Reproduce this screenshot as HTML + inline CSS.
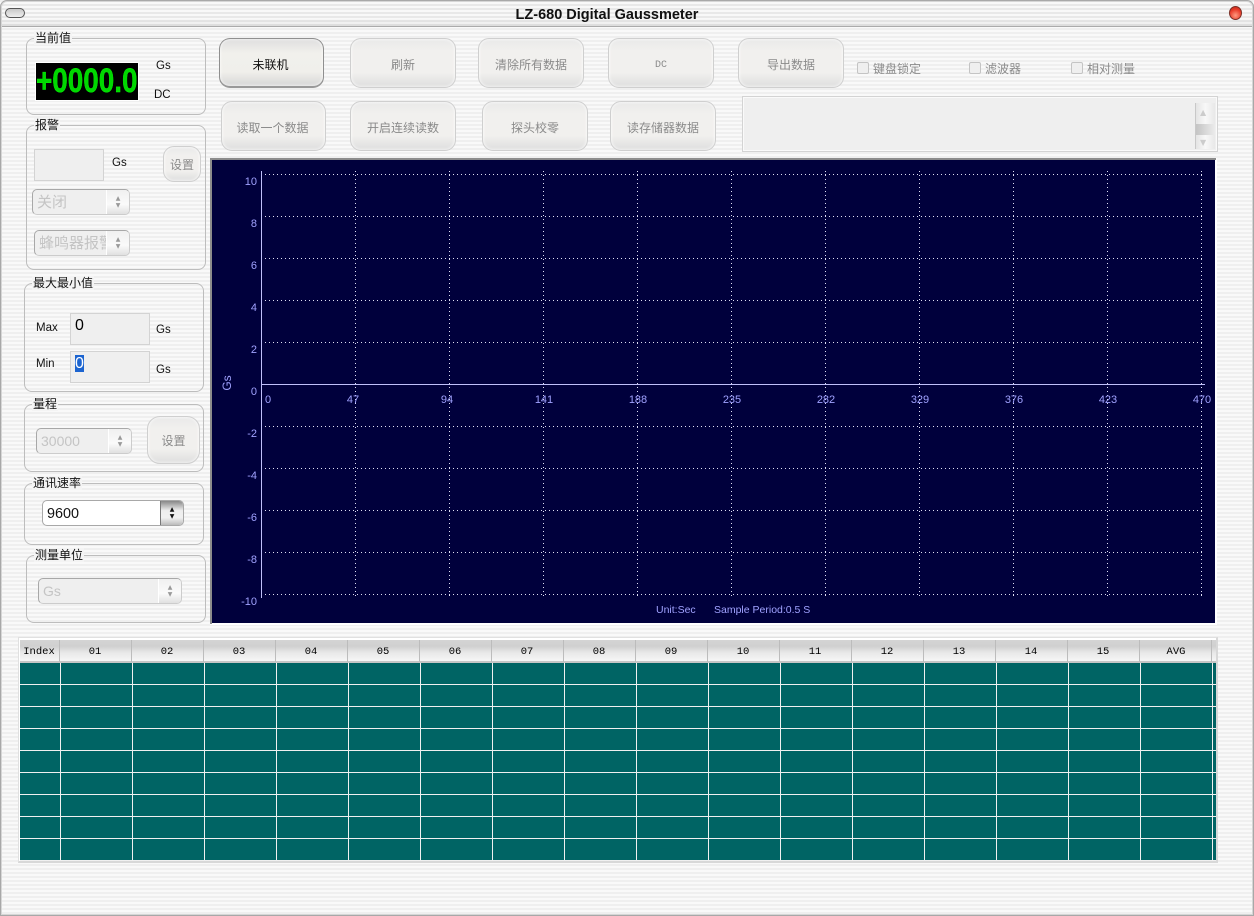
<!DOCTYPE html>
<html><head><meta charset="utf-8"><title>LZ-680 Digital Gaussmeter</title>
<style>
html,body{margin:0;padding:0}
body{width:1254px;height:916px;position:relative;overflow:hidden;background:repeating-linear-gradient(180deg,#efefef 0,#efefef 2px,#f9f9f9 2px,#f9f9f9 4px);font:12px "WenQuanYi Zen Hei","Noto Sans CJK SC","Liberation Sans",sans-serif;color:#000}
div,span,b{position:absolute;box-sizing:border-box;white-space:nowrap}
#frame{left:0;top:0;width:1254px;height:916px;border:1px solid #a8a8a8;border-radius:7px 7px 0 0;box-shadow:inset 0 0 0 1px #d6d6d6;pointer-events:none}
#tb{left:0;top:0;width:1254px;height:27px;border-bottom:1px solid #ababab;background:linear-gradient(180deg,transparent 70%,rgba(0,0,0,.05)),repeating-linear-gradient(180deg,#e8e8e8 0,#e8e8e8 2px,#f8f8f8 2px,#f8f8f8 4px);border-radius:7px 7px 0 0}
#title{left:0;width:1214px;top:7px;text-align:center;font:bold 14.5px "Liberation Sans",sans-serif;color:#111}
#pill{left:5px;top:8px;width:20px;height:10px;border:1px solid #555;border-radius:5px;background:linear-gradient(#c8c8c8,#eee)}
#close{left:1229px;top:6px;width:13px;height:14px;border-radius:50%;border:1px solid #7a3028;background:radial-gradient(circle at 50% 70%,#ff9a80,#e83a28 60%,#b82818)}
.g{border:1px solid #bdbdbd;border-radius:8px}
.l{background:#f4f4f4;padding:0 1px;line-height:14px;height:14px;font-size:12px;color:#111}
.t{font:11.5px "Liberation Sans",sans-serif;color:#111}
.btn{border:1px solid #cfcfcf;border-radius:11px;background:linear-gradient(#e9e9e9,#f1f0ee 25%,#f1f0ee 70%,#dedede);box-shadow:inset 0 0 3px #fff;color:#8a8a8a;text-align:center;font-size:12px}
.on{border:1px solid #8f8f8f;border-bottom:2px solid #999;color:#111;background:linear-gradient(#dedede,#f1f0ec 30%,#f0efeb 70%,#d6d6d6)}
.inp{background:#efefef;border:1px solid #d3d3d3}
.cb{border:1px solid;border-color:#a8a8a8 #cccccc #cccccc #a8a8a8;border-radius:5px;background:#efefef;color:#c4c4c4;font:15px/23px "WenQuanYi Zen Hei","Noto Sans CJK SC",sans-serif;padding-left:4px;overflow:hidden}
.cb i{position:absolute;right:0;top:0;bottom:0;width:22px;background:linear-gradient(#f0f0f0,#fafafa 60%,#e0e0e0);border-left:1px solid #fff;font:6px/7px "DejaVu Sans",sans-serif;color:#999;text-align:center;font-style:normal;padding-top:5px;white-space:pre}
.chk{width:12px;height:12px;border:1px solid #c4c4c4;border-radius:2px;background:#efefef}
.ct{color:#8a8a8a;font-size:12px}
#lcd{left:35px;top:62px;width:104px;height:39px;background:#000;border:1px solid #fff;overflow:hidden}
#lcd span{left:0;top:0;font:bold 34px/37px "Liberation Sans",sans-serif;color:#00d800;-webkit-text-stroke:.4px #00ff00;transform-origin:0 50%;transform:scaleX(.82)}
svg text{font-family:"Liberation Sans",sans-serif;font-size:11px;fill:#a0a2ff}
#tbl{left:18px;top:637px;width:1200px;height:226px;border:1px solid #e0e0e0;border-right:2px solid #d8d8d8;border-bottom:2px solid #d8d8d8;background:#fff}
#hd{left:1px;top:2px;width:1196px;height:23px;background:linear-gradient(#d4d4d4,#d0d0d0 30%,#e8e8e8 60%,#f6f6f6);border-bottom:2px solid #c6c6c6}
#hd span{top:5px;width:72px;text-align:center;font:10.5px "Liberation Mono",monospace;color:#000;height:14px;line-height:14px;border:0}
#hd u{position:absolute;top:0;width:1px;height:22px;background:#bcbcbc}
#cells{left:1px;top:25px;width:1196px;height:198px;background-color:#006464;
background-image:linear-gradient(90deg,#f0f0f0 1px,transparent 1px),linear-gradient(180deg,transparent 21px,#f0f0f0 21px);
background-size:72px 100%,100% 22px;background-position:40px 0,0 0;background-repeat:repeat-x,repeat-y}
</style></head><body>
<div id="tb"></div>
<div id="title">LZ-680 Digital Gaussmeter</div>
<div id="pill"></div><div id="close"></div>

<div class="g" style="left:26px;top:38px;width:180px;height:77px"></div><div class="l" style="left:34px;top:31px">当前值</div>
<div id="lcd"><span>+0000.0</span></div>
<div class="t" style="left:156px;top:60px">Gs</div><div class="t" style="left:154px;top:89px">DC</div>

<div class="g" style="left:26px;top:125px;width:180px;height:145px"></div><div class="l" style="left:34px;top:118px">报警</div>
<div class="inp" style="left:34px;top:149px;width:70px;height:32px"></div>
<div class="t" style="left:112px;top:157px">Gs</div>
<div class="btn" style="left:163px;top:146px;width:38px;height:36px;line-height:36px;padding:0">设置</div>
<div class="cb" style="left:32px;top:189px;width:98px;height:26px">关闭<i>▲
▼</i></div>
<div class="cb" style="left:34px;top:230px;width:96px;height:26px">蜂鸣器报警<i>▲
▼</i></div>

<div class="g" style="left:24px;top:283px;width:180px;height:109px"></div><div class="l" style="left:32px;top:276px">最大最小值</div>
<div class="t" style="left:36px;top:322px">Max</div>
<div class="inp" style="left:70px;top:313px;width:80px;height:32px"></div><div style="left:75px;top:317px;font:16px 'Liberation Sans',sans-serif">0</div>
<div class="t" style="left:156px;top:324px">Gs</div>
<div class="t" style="left:36px;top:358px">Min</div>
<div class="inp" style="left:70px;top:351px;width:80px;height:32px"></div><div style="left:75px;top:355px;height:17px;width:9px;background:#1c64d0;color:#fff;font:16px/17px 'Liberation Sans',sans-serif">0</div>
<div class="t" style="left:156px;top:364px">Gs</div>

<div class="g" style="left:24px;top:404px;width:180px;height:68px"></div><div class="l" style="left:32px;top:397px">量程</div>
<div class="cb" style="left:36px;top:428px;width:96px;height:26px;font:14px/25px 'Liberation Sans',sans-serif">30000<i>▲
▼</i></div>
<div class="btn" style="left:147px;top:416px;width:53px;height:48px;line-height:48px;border-radius:13px;padding:0">设置</div>

<div class="g" style="left:24px;top:483px;width:180px;height:62px"></div><div class="l" style="left:32px;top:476px">通讯速率</div>
<div class="cb" style="left:42px;top:500px;width:142px;height:26px;background:#fff;color:#111;border-color:#a8a8a8;font:14.4px/26px 'Liberation Sans',sans-serif">9600<i style="background:linear-gradient(#888,#eee 40%,#f0f0f0 70%,#bbb);border-left:1px solid #777;color:#111">▲
▼</i></div>

<div class="g" style="left:26px;top:555px;width:180px;height:68px"></div><div class="l" style="left:34px;top:548px">测量单位</div>
<div class="cb" style="left:38px;top:578px;width:144px;height:26px;font:14px/25px 'Liberation Sans',sans-serif">Gs<i>▲
▼</i></div>

<div class="btn on" style="left:219px;top:38px;width:105px;height:50px;line-height:51px;padding-right:2px">未联机</div>
<div class="btn" style="left:350px;top:38px;width:106px;height:50px;line-height:51px">刷新</div>
<div class="btn" style="left:478px;top:38px;width:106px;height:50px;line-height:51px">清除所有数据</div>
<div class="btn" style="left:608px;top:38px;width:106px;height:50px;font:10px/53px 'Liberation Mono',monospace">DC</div>
<div class="btn" style="left:738px;top:38px;width:106px;height:50px;line-height:51px">导出数据</div>
<div class="btn" style="left:221px;top:101px;width:105px;height:50px;line-height:51px;padding-right:2px">读取一个数据</div>
<div class="btn" style="left:350px;top:101px;width:106px;height:50px;line-height:51px">开启连续读数</div>
<div class="btn" style="left:482px;top:101px;width:106px;height:50px;line-height:51px">探头校零</div>
<div class="btn" style="left:610px;top:101px;width:106px;height:50px;line-height:51px">读存储器数据</div>

<div class="chk" style="left:857px;top:62px"></div><div class="ct" style="left:873px;top:60px">键盘锁定</div>
<div class="chk" style="left:969px;top:62px"></div><div class="ct" style="left:985px;top:60px">滤波器</div>
<div class="chk" style="left:1071px;top:62px"></div><div class="ct" style="left:1087px;top:60px">相对测量</div>

<div class="inp" style="left:742px;top:96px;width:476px;height:56px;background:#efefef;box-shadow:inset 0 0 0 1px #fafafa"></div>
<div style="left:1195px;top:103px;width:20px;height:46px;border-left:1px solid #c8c8c8;background:linear-gradient(90deg,#e4e4e4,#f8f8f8 50%,#e8e8e8)"><div style="left:0;top:21px;width:19px;height:11px;background:linear-gradient(90deg,#c4c4c4,#ebebeb)"></div><div style="left:4px;top:5px;font:8px 'DejaVu Sans',sans-serif;color:#ccc">▲</div><div style="left:4px;top:35px;font:8px 'DejaVu Sans',sans-serif;color:#ccc">▼</div></div>

<svg style="position:absolute;left:210px;top:158px" width="1008" height="468" viewBox="210 158 1008 468">
<rect x="210" y="158" width="1007" height="467" fill="#fff"/>
<rect x="210" y="158" width="1006" height="2" fill="#8c8c8c"/>
<rect x="210" y="158" width="2" height="466" fill="#8c8c8c"/>
<rect x="212" y="160" width="1003" height="463" fill="#00003c"/>
<g stroke="#e0e0f4" stroke-width="1" stroke-dasharray="1 3" fill="none">
<path d="M265 174.500H1205M265 216.500H1205M265 258.500H1205M265 300.500H1205M265 342.500H1205M265 426.500H1205M265 468.500H1205M265 510.500H1205M265 552.500H1205M265 594.500H1205"/>
<path d="M355.500 171V597M449.500 171V597M543.500 171V597M637.500 171V597M731.500 171V597M825.500 171V597M919.500 171V597M1013.500 171V597M1107.500 171V597M1201.500 171V597"/>
</g>
<path d="M261.500 171V598M262 384.500H1205" stroke="#c0c0fa" stroke-width="1" fill="none"/>
<g text-anchor="end">
<text x="257" y="185">10</text><text x="257" y="227">8</text><text x="257" y="269">6</text><text x="257" y="311">4</text><text x="257" y="353">2</text><text x="257" y="395">0</text><text x="257" y="437">-2</text><text x="257" y="479">-4</text><text x="257" y="521">-6</text><text x="257" y="563">-8</text><text x="257" y="605">-10</text>
</g>
<g text-anchor="middle">
<text x="268" y="403">0</text><text x="353" y="403">47</text><text x="447" y="403">94</text><text x="544" y="403">141</text><text x="638" y="403">188</text><text x="732" y="403">235</text><text x="826" y="403">282</text><text x="920" y="403">329</text><text x="1014" y="403">376</text><text x="1108" y="403">423</text><text x="1202" y="403">470</text>
</g>
<text x="231" y="383" text-anchor="middle" transform="rotate(-90 231 383)" style="font-size:12px">Gs</text>
<text x="656" y="613" style="font-size:10.5px">Unit:Sec</text>
<text x="714" y="613" style="font-size:10.5px">Sample Period:0.5 S</text>
</svg>

<div id="tbl">
<div id="cells"></div>
<div id="hd">
<span style="left:-1px;width:40px">Index</span><u style="left:39px"></u>
<span style="left:39px">01</span><u style="left:111px"></u>
<span style="left:111px">02</span><u style="left:183px"></u>
<span style="left:183px">03</span><u style="left:255px"></u>
<span style="left:255px">04</span><u style="left:327px"></u>
<span style="left:327px">05</span><u style="left:399px"></u>
<span style="left:399px">06</span><u style="left:471px"></u>
<span style="left:471px">07</span><u style="left:543px"></u>
<span style="left:543px">08</span><u style="left:615px"></u>
<span style="left:615px">09</span><u style="left:687px"></u>
<span style="left:687px">10</span><u style="left:759px"></u>
<span style="left:759px">11</span><u style="left:831px"></u>
<span style="left:831px">12</span><u style="left:903px"></u>
<span style="left:903px">13</span><u style="left:975px"></u>
<span style="left:975px">14</span><u style="left:1047px"></u>
<span style="left:1047px">15</span><u style="left:1119px"></u>
<span style="left:1120px">AVG</span><u style="left:1191px"></u>
</div>
</div>
<div id="frame"></div>
</body></html>
